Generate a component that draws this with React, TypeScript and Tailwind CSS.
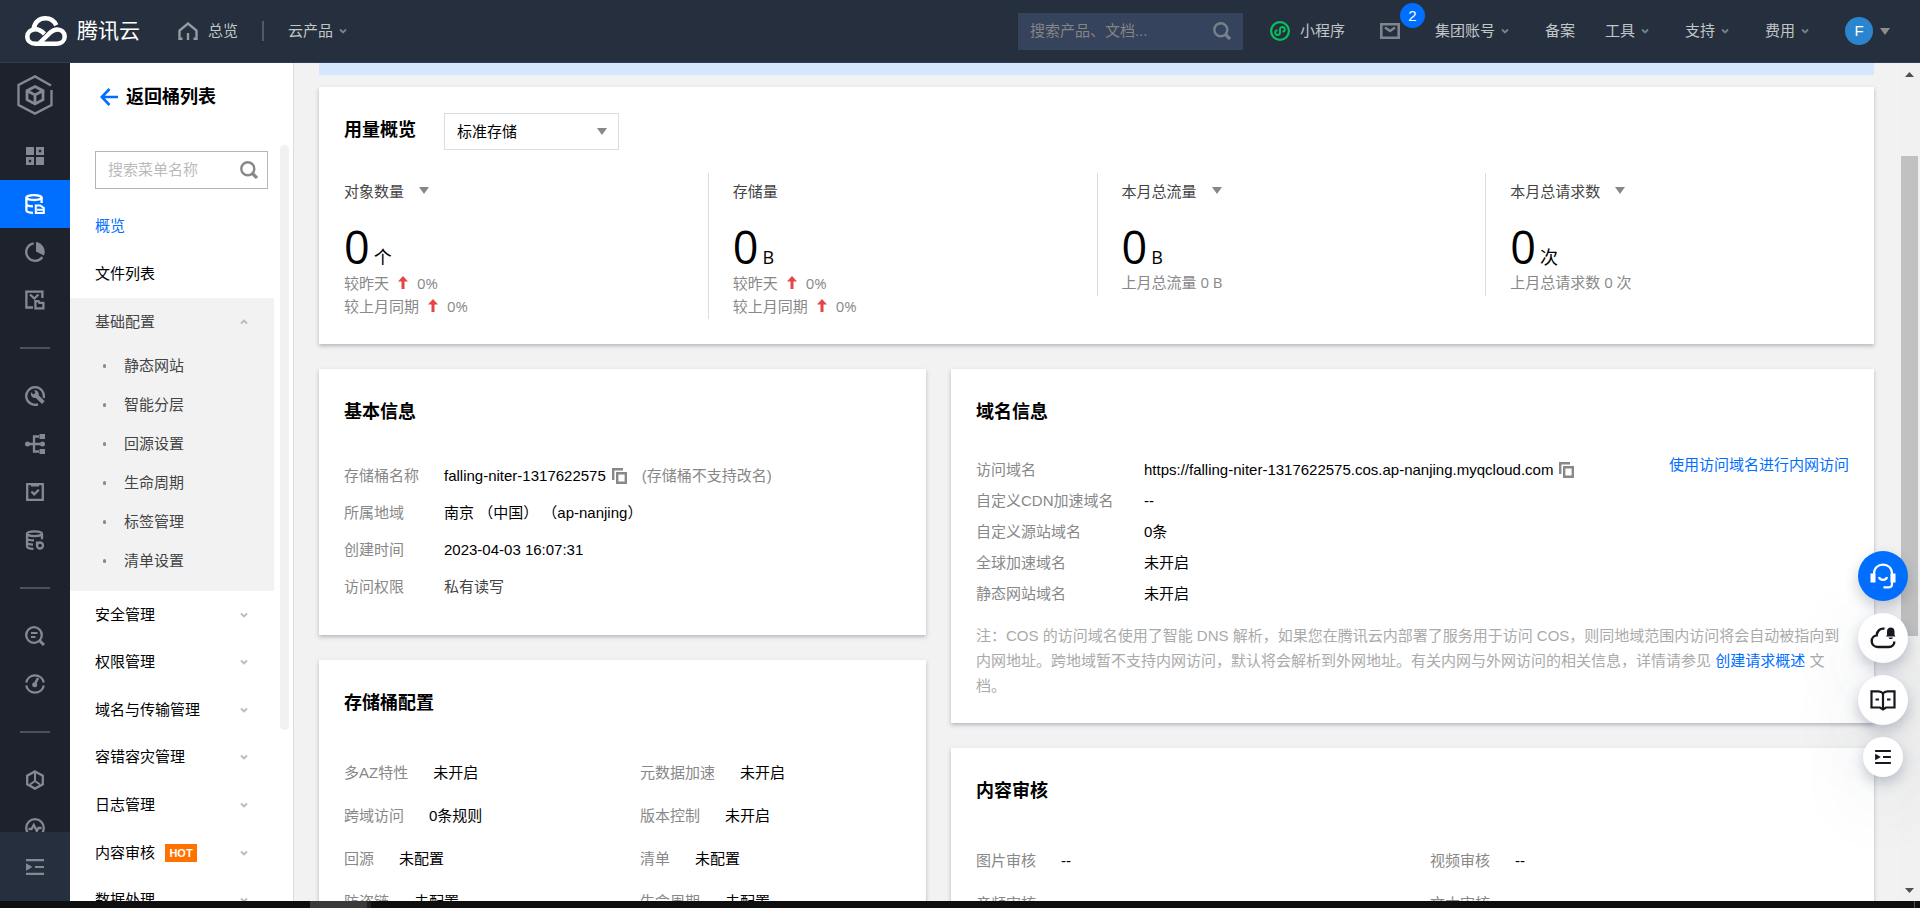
import type { ReactNode } from 'react';

type Stat = {
  label: string;
  unit: string;
  hasMenu?: boolean;
  trends?: string[];
  note?: string;
};

type Field = { label: string; value: string };

const stats: Stat[] = [
  { label: '对象数量', unit: '个', hasMenu: true, trends: ['较昨天', '较上月同期'] },
  { label: '存储量', unit: 'B', trends: ['较昨天', '较上月同期'] },
  { label: '本月总流量', unit: 'B', hasMenu: true, note: '上月总流量 0 B' },
  { label: '本月总请求数', unit: '次', hasMenu: true, note: '上月总请求数 0 次' },
];

const bucketConfig: Field[] = [
  { label: '多AZ特性', value: '未开启' },
  { label: '元数据加速', value: '未开启' },
  { label: '跨域访问', value: '0条规则' },
  { label: '版本控制', value: '未开启' },
  { label: '回源', value: '未配置' },
  { label: '清单', value: '未配置' },
  { label: '防盗链', value: '未配置' },
  { label: '生命周期', value: '未配置' },
];

const moderation: Field[] = [
  { label: '图片审核', value: '--' },
  { label: '视频审核', value: '--' },
  { label: '音频审核', value: '--' },
  { label: '文本审核', value: '--' },
];

const domains: Field[] = [
  { label: '自定义CDN加速域名', value: '--' },
  { label: '自定义源站域名', value: '0条' },
  { label: '全球加速域名', value: '未开启' },
  { label: '静态网站域名', value: '未开启' },
];

const subMenu = ['静态网站', '智能分层', '回源设置', '生命周期', '标签管理', '清单设置'];

const menu = [
  { label: '安全管理' },
  { label: '权限管理' },
  { label: '域名与传输管理' },
  { label: '容错容灾管理' },
  { label: '日志管理' },
  { label: '内容审核', hot: true },
  { label: '数据处理' },
];

function RailIcon({ children }: { children: ReactNode }) {
  return (
    <svg
      viewBox="0 0 20 20"
      className="h-5 w-5"
      fill="none"
      stroke="currentColor"
      strokeWidth="2.3"
      aria-hidden="true"
    >
      {children}
    </svg>
  );
}

const railItems: { name: string; icon?: ReactNode; active?: boolean }[] = [
  {
    name: '概览',
    icon: (
      <>
        <path d="M1 1h8v8H1zM11 11h8v8h-8z" fill="currentColor" stroke="none" />
        <path d="M12.4 2.4h5.200v5.200h-5.200zM2.400 12.400h5.200v5.200H2.400z" strokeWidth="2.8" />
      </>
    ),
  },
  {
    name: '存储桶列表',
    active: true,
    icon: (
      <>
        <ellipse cx="9" cy="3.6" rx="7.6" ry="2.4" />
        <path d="M1.4 3.6v12.600c0 1.500 2.600 2.500 6.600 2.700M16.600 3.600v5.400M1.400 10c0 1.400 2.600 2.200 6.600 2.400" />
        <path d="M10.800 11.500h4.400l3.600 2.500v5h-8zM12 15.800h6" strokeWidth="2" />
      </>
    ),
  },
  {
    name: '数据监控',
    icon: (
      <>
        <path d="M8.700 1.300A8.800 8.800 0 1 0 17.300 15" />
        <path d="M11 0a10 10 0 0 1 8 13.500L11 9.500z" fill="currentColor" stroke="none" />
      </>
    ),
  },
  {
    name: '数据处理',
    icon: (
      <>
        <path d="M8 17.500H1.400V1.600h16v6.400M5 4.500l4.300 4L13.500 4.500" />
        <path d="M10.400 11.200h3l1 1.600h4v5.600h-8z" />
      </>
    ),
  },
  { name: 'divider-1' },
  {
    name: '工具箱',
    icon: (
      <>
        <path d="M13 18.300A8.800 8.800 0 1 1 18.600 12" />
        <path
          d="M6 6.200l2.500 2.300 2-1.900-1.400-2.300c2.900-.5 5.200 1.800 4.600 4.900l6 6-2.700 2.700-6.100-6c-3.200.7-5.700-2.200-4.900-5.700z"
          fill="currentColor"
          stroke="none"
        />
      </>
    ),
  },
  {
    name: '数据工作流',
    icon: (
      <>
        <path d="M2 10h17M14 2.500H9v15h5" />
        <path d="M14.500 0H20v5h-5.500zM14.500 15H20v5h-5.500z" fill="currentColor" stroke="none" />
        <circle cx="2.500" cy="10" r="2.500" fill="currentColor" stroke="none" />
        <circle cx="17.500" cy="10" r="2.500" fill="currentColor" stroke="none" />
      </>
    ),
  },
  {
    name: '应用集成',
    icon: <path d="M2.200 2.200h15.600v15.600H2.200zM6 3.400h8M6.400 9.500l2.800 2.800 4.600-4.600" />,
  },
  {
    name: '数据集成',
    icon: (
      <>
        <ellipse cx="9.500" cy="3.700" rx="7.500" ry="2.400" />
        <path d="M2 3.700v12.500c0 1.500 2.800 2.500 6.500 2.600M17 3.700v5.600M2 8c0 1.500 3 2.400 7 2.400M2 12.300c0 1.400 2.800 2.300 6 2.400" />
        <circle cx="15" cy="15.500" r="3" />
        <path d="M12 11.500v4" />
      </>
    ),
  },
  { name: 'divider-2' },
  {
    name: '查询',
    icon: (
      <>
        <circle cx="9" cy="9" r="7.800" />
        <path d="M14.500 14.500l4.500 4.500" strokeWidth="3" />
        <path d="M6 7h6.500M6 11h4.500" strokeWidth="2" />
      </>
    ),
  },
  {
    name: '性能',
    icon: (
      <>
        <path d="M1.200 8.500a9 9 0 0 1 17.600 0M1.200 11.500a9 9 0 0 0 17.600 0" />
        <path d="M9.700 10.500L13 4" strokeWidth="2.600" />
        <circle cx="9.700" cy="10.800" r="2.500" fill="currentColor" stroke="none" />
      </>
    ),
  },
  { name: 'divider-3' },
  {
    name: '资源包',
    icon: (
      <>
        <path d="M10 1.400l7.800 4.300v8.600L10 18.600l-7.800-4.300V5.700z" />
        <path d="M10 2v9M10 11l-5 3.500M10 11l5 3.500" strokeWidth="2" />
      </>
    ),
  },
  {
    name: '健康',
    icon: (
      <>
        <circle cx="10" cy="10" r="8.800" />
        <path d="M3.500 11h3l2.300-4 3 6 1.700-3h3" />
      </>
    ),
  },
];

function IndentIcon({ className }: { className: string }) {
  return (
    <svg viewBox="0 0 18 16" className={className} fill="currentColor" aria-hidden="true">
      <path d="M0 0h18v2.200H0zM9 6.900h9v2.200H9zM0 13.800h18V16H0zM0 4.200L6.500 8 0 11.800z" />
    </svg>
  );
}

function Chevron({ isUp }: { isUp?: boolean }) {
  return (
    <svg viewBox="0 0 8 6" className="h-1.5 w-2" fill="none" stroke="currentColor" aria-hidden="true">
      <path d={isUp ? 'M1 4.500l3-3 3 3' : 'M1 1.500l3 3 3-3'} strokeWidth="1.800" />
    </svg>
  );
}

function Caret({ className }: { className?: string }) {
  return (
    <svg viewBox="0 0 10 7" className={`h-[7px] w-2.5 ${className ?? ''}`} fill="currentColor" aria-hidden="true">
      <path d="M0 0h10L5 7z" />
    </svg>
  );
}

function SearchIcon() {
  return (
    <svg viewBox="0 0 18 18" className="h-[18px] w-[18px]" fill="none" stroke="currentColor" aria-hidden="true">
      <circle cx="7.800" cy="7.800" r="6.500" strokeWidth="2.400" />
      <path d="M12.500 12.500l4.500 4.500" strokeWidth="3.200" />
    </svg>
  );
}

function CopyButton() {
  return (
    <button type="button" aria-label="复制" className="text-[#888]">
      <svg viewBox="0 0 15 16" className="h-4 w-[15px]" fill="none" stroke="currentColor" strokeWidth="2.400">
        <path d="M1.200 12V1.200h9.800" />
        <path d="M5.200 5.200h8.600v9.600H5.200z" />
      </svg>
    </button>
  );
}

function TopItem({ label, hasMenu }: { label: string; hasMenu?: boolean }) {
  return (
    <button type="button" className="flex items-center">
      {label}
      {hasMenu && (
        <span className="flex w-5 justify-center text-[#76818b]">
          <Chevron />
        </span>
      )}
    </button>
  );
}

function Header() {
  return (
    <header className="flex h-[63px] shrink-0 items-center border-b border-[#2f3d52] bg-[#262f3e] pl-[25px] pr-[30px] text-[#c1c6c8]">
      <a href="#" className="flex items-center gap-2.5 text-white">
        <svg viewBox="0 0 42 30" className="h-[30px] w-[42px]" fill="none" stroke="currentColor" strokeWidth="4.500" aria-hidden="true">
          <path d="M8.800 12.500C9.500 6 14.500 2.300 20.300 2.300c5.200 0 9 2.700 11 7" />
          <path d="M19.500 17.800c-2.700-2.500-5.500-4.500-9-4.500-4.800 0-8.200 3.200-8.200 7.200 0 4.200 3.400 7.200 8 7.200h21.700c4.400 0 7.700-3 7.700-7.100s-3.200-7.200-7.500-7.200c-3 0-5 1.300-7 3.200L14.500 27" />
        </svg>
        <span className="text-[21px]">腾讯云</span>
      </a>
      <a href="#" className="ml-[38px] flex items-center gap-2.5">
        <svg viewBox="0 0 20 18" className="h-[18px] w-5" fill="none" stroke="#949ba1" strokeWidth="2.400" aria-hidden="true">
          <path d="M4.500 16.800H1.500V8.500L10 1.500l8.500 7v8.300h-3M10 18v-7" />
        </svg>
        总览
      </a>
      <span className="mx-6 h-5 w-0.5 bg-[#515a64]" />
      <TopItem label="云产品" hasMenu />

      <form className="ml-auto mr-[27px] flex h-[37px] w-[225px] items-center bg-[#36435c] px-3 text-[#76818b]">
        <input
          type="search"
          aria-label="搜索产品、文档"
          placeholder="搜索产品、文档..."
          className="min-w-0 flex-1 bg-transparent outline-none placeholder:text-[#858585]"
        />
        <button type="button" aria-label="搜索">
          <SearchIcon />
        </button>
      </form>
      <a href="#" className="flex items-center gap-2.5">
        <svg viewBox="0 0 20 20" className="h-5 w-5" fill="none" stroke="#07c160" aria-hidden="true">
          <circle cx="10" cy="10" r="8.900" strokeWidth="2.200" />
          <path
            d="M6.800 9.300c-2.300.8-2 4.700.9 4.700 1.300 0 2.300-.9 2.300-2.200V8.200C10 6.900 11 6 12.300 6c2.900 0 3.200 3.900.9 4.700"
            strokeWidth="1.900"
            strokeLinecap="round"
          />
        </svg>
        小程序
      </a>
      <a href="#" aria-label="消息" className="relative mx-[35px]">
        <svg viewBox="0 0 20 16" className="h-4 w-5" fill="none" stroke="#7d868e" strokeWidth="2.600" aria-hidden="true">
          <path d="M1.300 1.300h17.400v13.400H1.300zM5 4.500l5 3.500 5-3.500" />
        </svg>
        <span className="absolute -top-5 left-5 flex h-[25px] w-[25px] items-center justify-center rounded-full bg-[#006eff] text-white">
          2
        </span>
      </a>
      <nav className="flex items-center gap-[30px]">
        <TopItem label="集团账号" hasMenu />
        <TopItem label="备案" />
        <TopItem label="工具" hasMenu />
        <TopItem label="支持" hasMenu />
        <TopItem label="费用" hasMenu />
        <button type="button" aria-label="账号" className="flex items-center gap-[7px] text-[#8d8d8d]">
          <span className="flex h-7 w-7 items-center justify-center rounded-full bg-[#2a85ce] text-white">F</span>
          <Caret />
        </button>
      </nav>
    </header>
  );
}

function IconRail() {
  return (
    <nav className="relative flex w-[70px] shrink-0 flex-col overflow-hidden bg-[#1e222d] text-[#828b92]">
      <a href="#" aria-label="对象存储" className="flex h-[69px] shrink-0 items-start justify-center pt-3">
        <svg viewBox="0 0 36 40" className="h-10 w-9" fill="none" stroke="currentColor" strokeWidth="2.300" aria-hidden="true">
          <path d="M34.500 15v15L18 38.600 1.500 30V10L18 1.400 34 10.500" />
          <path d="M18 11.500l8 4.200v9L18 29l-8-4.300v-9zM10.500 16l7.500 4 7.500-4M18 20v9" strokeWidth="2.800" />
        </svg>
      </a>
      {railItems.map((item) =>
        item.icon ? (
          <a
            key={item.name}
            href="#"
            aria-label={item.name}
            className={
              item.active
                ? 'flex h-12 shrink-0 items-center justify-center bg-[#006eff] text-white'
                : 'flex h-12 shrink-0 items-center justify-center'
            }
          >
            <RailIcon>{item.icon}</RailIcon>
          </a>
        ) : (
          <div key={item.name} className="flex h-12 shrink-0 items-center justify-center">
            <span className="h-0.5 w-[30px] bg-[#4b525b]" />
          </div>
        ),
      )}
      <button
        type="button"
        aria-label="展开导航"
        className="absolute inset-x-0 bottom-0 flex h-[69px] items-center justify-center bg-[#262f3e]"
      >
        <IndentIcon className="h-4 w-[18px]" />
      </button>
    </nav>
  );
}

function SideMenu() {
  return (
    <aside className="flex w-[224px] shrink-0 flex-col overflow-hidden border-r border-[#dcdcdc] bg-white text-black">
      <a href="#" className="flex h-[68px] shrink-0 items-center gap-2 pl-[30px] text-lg font-bold">
        <svg viewBox="0 0 18 18" className="h-[18px] w-[18px]" fill="none" stroke="#006eff" strokeWidth="2.600" aria-hidden="true">
          <path d="M9.500 1L1.800 9l7.700 8M1.800 9H18" />
        </svg>
        返回桶列表
      </a>
      <div className="flex min-h-0 flex-1 pt-3.5">
        <div className="w-[204px] shrink-0">
          <form className="mb-[13px] ml-[25px] mt-1.5 flex h-[38px] w-[173px] items-center border border-[#b5b5b5] pl-3 pr-[9px] text-[#888]">
            <input
              type="search"
              aria-label="搜索菜单名称"
              placeholder="搜索菜单名称"
              className="min-w-0 flex-1 bg-transparent outline-none placeholder:text-[#bbb]"
            />
            <button type="button" aria-label="搜索">
              <SearchIcon />
            </button>
          </form>
          <a href="#" className="flex h-12 items-center pl-[25px] text-[#006eff]">
            概览
          </a>
          <a href="#" className="flex h-12 items-center pl-[25px]">
            文件列表
          </a>
          <div className="bg-[#f2f2f2] pb-[11px] text-[#444]">
            <button type="button" className="flex h-12 w-full items-center justify-between pl-[25px] pr-[26px]">
              基础配置
              <span className="text-[#bbb]">
                <Chevron isUp />
              </span>
            </button>
            <ul className="grid h-[234px] auto-rows-fr">
              {subMenu.map((label) => (
                <li key={label} className="flex items-center gap-[18px] pl-[33px]">
                  <span className="h-1 w-[3px] rounded-full bg-[#888]" />
                  <a href="#">{label}</a>
                </li>
              ))}
            </ul>
          </div>
          <ul className="grid h-[333px] auto-rows-fr">
            {menu.map((item) => (
              <li key={item.label} className="grid">
                <button type="button" className="flex items-center pl-[25px] pr-[26px]">
                  {item.label}
                  {item.hot && (
                    <span className="ml-2.5 flex h-[18px] w-8 items-center justify-center bg-[#ff7200] text-[11px] font-bold text-white">
                      HOT
                    </span>
                  )}
                  <span className="ml-auto text-[#bbb]">
                    <Chevron />
                  </span>
                </button>
              </li>
            ))}
          </ul>
        </div>
        <div className="ml-1.5 h-[585px] w-[9px] rounded-full bg-[#f1f1f1]" />
      </div>
    </aside>
  );
}

function Card({ title, className, children }: { title: string; className?: string; children: ReactNode }) {
  return (
    <section className={`bg-white px-[25px] pt-[25px] shadow-[0_2px_4px_rgba(54,58,80,0.32)] ${className ?? ''}`}>
      <h2 className="text-lg font-bold leading-9 text-black">{title}</h2>
      {children}
    </section>
  );
}

function StatColumn({ stat, isFirst }: { stat: Stat; isFirst: boolean }) {
  return (
    <div
      className={
        isFirst
          ? 'flex-1 border-l border-transparent pl-6 pt-1.5'
          : 'flex-1 border-l border-[#ddd] pl-6 pt-1.5'
      }
    >
      <div className="flex h-[23px] items-center gap-[15px] text-[#444]">
        {stat.label}
        {stat.hasMenu && (
          <button type="button" aria-label={`切换${stat.label}`} className="text-[#888]">
            <Caret />
          </button>
        )}
      </div>
      <p className="flex h-[69px] items-baseline gap-1 pt-3.5 text-lg text-black">
        <span className="text-[45px] leading-[62px]">0</span>
        {stat.unit}
      </p>
      {stat.trends?.map((trend) => (
        <p key={trend} className="flex h-[23px] items-center gap-[9px] text-[#888]">
          {trend}
          <svg viewBox="0 0 10 13" className="h-[13px] w-2.5" aria-hidden="true">
            <path d="M5 0l5 5.500H6.500V13h-3V5.500H0z" fill="#e54545" />
          </svg>
          0%
        </p>
      ))}
      {stat.note && <p className="h-[25px] leading-[23px] text-[#888]">{stat.note}</p>}
      {stat.trends && <div className="h-0.5" />}
    </div>
  );
}

function UsageCard() {
  return (
    <section className="mt-3 bg-white pb-[25px] pt-[25px] shadow-[0_2px_4px_rgba(54,58,80,0.32)]">
      <div className="flex h-[38px] items-center gap-7 pl-[25px]">
        <h2 className="pb-0.5 text-lg font-bold text-black">用量概览</h2>
        <label className="relative">
          <select
            aria-label="存储类型"
            className="h-[37px] w-[175px] appearance-none rounded-none border border-[#ddd] bg-white pl-3 pt-0.5 text-black outline-none"
          >
            <option>标准存储</option>
          </select>
          <Caret className="pointer-events-none absolute right-3 top-[15px] text-[#888]" />
        </label>
      </div>
      <div className="mt-[23px] flex items-start font-['Open_Sans','Noto_Sans_CJK_SC',sans-serif]">
        {stats.map((stat, index) => (
          <StatColumn key={stat.label} stat={stat} isFirst={index === 0} />
        ))}
      </div>
    </section>
  );
}

function InfoRow({ label, children }: { label: string; children: ReactNode }) {
  return (
    <div className="flex h-[37px] items-center">
      <dt className="w-[100px] shrink-0 text-[#888]">{label}</dt>
      <dd className="flex items-center text-black">{children}</dd>
    </div>
  );
}

function FieldGrid({ fields }: { fields: Field[] }) {
  return (
    <dl className="mt-[30px] grid grid-cols-2 gap-x-[35px] pb-6">
      {fields.map((field) => (
        <div key={field.label} className="flex h-[43px] items-center gap-[25px]">
          <dt className="text-[#888]">{field.label}</dt>
          <dd className="text-black">{field.value}</dd>
        </div>
      ))}
    </dl>
  );
}

function DomainCard() {
  return (
    <Card title="域名信息" className="pb-[25px]">
      <div className="mt-6 flex items-start justify-between">
        <dl>
          <div className="flex h-[31px] items-center">
            <dt className="w-[168px] shrink-0 text-[#888]">访问域名</dt>
            <dd className="flex items-center gap-1.5 text-black">
              https://falling-niter-1317622575.cos.ap-nanjing.myqcloud.com
              <CopyButton />
            </dd>
          </div>
          {domains.map((field) => (
            <div key={field.label} className="flex h-[31px] items-center">
              <dt className="w-[168px] shrink-0 text-[#888]">{field.label}</dt>
              <dd className="text-black">{field.value}</dd>
            </div>
          ))}
        </dl>
        <a href="#" className="leading-[22px] text-[#006eff]">
          使用访问域名进行内网访问
        </a>
      </div>
      <p className="mt-3.5 leading-[25px] text-[#aaa]">
        注：COS 的访问域名使用了智能 DNS 解析，如果您在腾讯云内部署了服务用于访问
        COS，则同地域范围内访问将会自动被指向到内网地址。跨地域暂不支持内网访问，默认将会解析到外网地址。有关内网与外网访问的相关信息，详情请参见{' '}
        <a href="#" className="text-[#006eff]">
          创建请求概述
        </a>{' '}
        文档。
      </p>
    </Card>
  );
}

function FloatingTools() {
  const whiteButton =
    'flex h-[50px] w-[50px] items-center justify-center rounded-full bg-white shadow-[0_6px_14px_rgba(54,68,100,0.28),0_20px_80px_rgba(54,68,90,0.14)]';

  return (
    <div className="absolute bottom-[124px] right-3 flex flex-col items-center gap-3 text-[#16181d]">
      <button
        type="button"
        aria-label="在线客服"
        className="flex h-[50px] w-[50px] items-center justify-center rounded-full bg-[#006eff] text-white shadow-[0_6px_14px_rgba(54,68,100,0.28)]"
      >
        <svg viewBox="0 0 26 26" className="h-[26px] w-[26px]" fill="none" stroke="currentColor" strokeWidth="2.200" aria-hidden="true">
          <path d="M4 12v-1.500C4 5 8 1.600 13 1.600s9 3.400 9 8.900v10.500c0 2-1 3.300-3 3.300h-5.500" />
          <path d="M9 14c.8 3.800 7.200 3.800 8 0" />
          <path d="M.5 10.500h5v9h-5zM20.500 10.500h5v9h-5z" fill="currentColor" stroke="none" />
        </svg>
      </button>
      <button type="button" aria-label="消息通知" className={whiteButton}>
        <svg viewBox="0 0 26 22" className="h-[22px] w-[26px]" fill="none" stroke="currentColor" strokeWidth="2.400" aria-hidden="true">
          <path d="M14.500 1.800c-4-.8-7.500 1.700-7.800 6.600C3.800 8.700 1.700 11 1.700 14c0 3.400 2.500 6 6 6h11c3.400 0 5.600-2.300 5.600-5.600" />
          <path d="M17 8V4.500C17 2 18.500.5 20.800.5s3.700 1.500 3.700 4V8l1 1.500h-9.500zM18.500 10.500h4.500l-1 1.500h-2.500z" fill="currentColor" stroke="none" />
        </svg>
      </button>
      <button type="button" aria-label="帮助文档" className={whiteButton}>
        <svg viewBox="0 0 26 21" className="h-[21px] w-[26px]" fill="none" stroke="currentColor" strokeWidth="2.200" aria-hidden="true">
          <path d="M13 3.500C12 2 10.500 1.300 8.500 1.300H1.500v16.200h8.500l3 2 3-2h8.500V1.300h-7c-2 0-3.500.7-4.500 2.200zM13 3.500v16M5.500 9.500h3.500M17 9.500h3.500" />
        </svg>
      </button>
      <button
        type="button"
        aria-label="收起"
        className="flex h-10 w-10 items-center justify-center rounded-full bg-white shadow-[0_6px_14px_rgba(54,68,100,0.28),0_20px_80px_rgba(54,68,90,0.14)]"
      >
        <IndentIcon className="h-3.5 w-4" />
      </button>
    </div>
  );
}

function ScrollTrack() {
  return (
    <div className="flex w-[21px] shrink-0 flex-col items-center bg-[#f1f1f1] text-[#505050]">
      <svg viewBox="0 0 9 5" className="mt-[9px] h-[5px] w-[9px]" fill="currentColor" aria-hidden="true">
        <path d="M0 5h9L4.500 0z" />
      </svg>
      <div className="mb-auto mt-[79px] h-[480px] w-[17px] bg-[#c1c1c1]" />
      <svg viewBox="0 0 9 5" className="mb-2 h-[5px] w-[9px]" fill="currentColor" aria-hidden="true">
        <path d="M0 0h9L4.500 5z" />
      </svg>
    </div>
  );
}

export default function App() {
  return (
    <div className="flex h-screen flex-col overflow-hidden bg-[#f2f2f2] font-['Liberation_Sans','Noto_Sans_CJK_SC',sans-serif] text-[15px] leading-[22px]">
      <Header />
      <div className="relative flex min-h-0 flex-1">
        <IconRail />
        <SideMenu />
        <main className="min-w-0 flex-1 overflow-hidden px-[25px]">
          <div className="h-3 bg-[#d5e7ff]" />
          <UsageCard />
          <div className="-mr-[25px] mt-[25px] flex items-start">
            <div className="w-2/5 space-y-[25px] pr-[25px]">
              <Card title="基本信息" className="pb-[30px]">
                <dl className="mt-[27px]">
                  <InfoRow label="存储桶名称">
                    <span className="mr-1.5">falling-niter-1317622575</span>
                    <CopyButton />
                    <span className="ml-[15px] text-[#888]">(存储桶不支持改名)</span>
                  </InfoRow>
                  <InfoRow label="所属地域">南京 （中国） （ap-nanjing）</InfoRow>
                  <InfoRow label="创建时间">2023-04-03 16:07:31</InfoRow>
                  <InfoRow label="访问权限">
                    <span className="text-[#444]">私有读写</span>
                  </InfoRow>
                </dl>
              </Card>
              <Card title="存储桶配置">
                <FieldGrid fields={bucketConfig} />
              </Card>
            </div>
            <div className="w-3/5 space-y-[25px] pr-[25px]">
              <DomainCard />
              <Card title="内容审核">
                <FieldGrid fields={moderation} />
              </Card>
            </div>
          </div>
        </main>
        <ScrollTrack />
        <FloatingTools />
      </div>
      {/* task bar edge */}
      <div className="flex h-[7px] shrink-0 justify-between bg-[#0f0f0f]">
        <span className="ml-[310px] w-[61px] border-r-4 border-[#222] bg-[#3a3a3a]" />
        <span className="mr-[5px] w-px bg-[#555]" />
      </div>
    </div>
  );
}
